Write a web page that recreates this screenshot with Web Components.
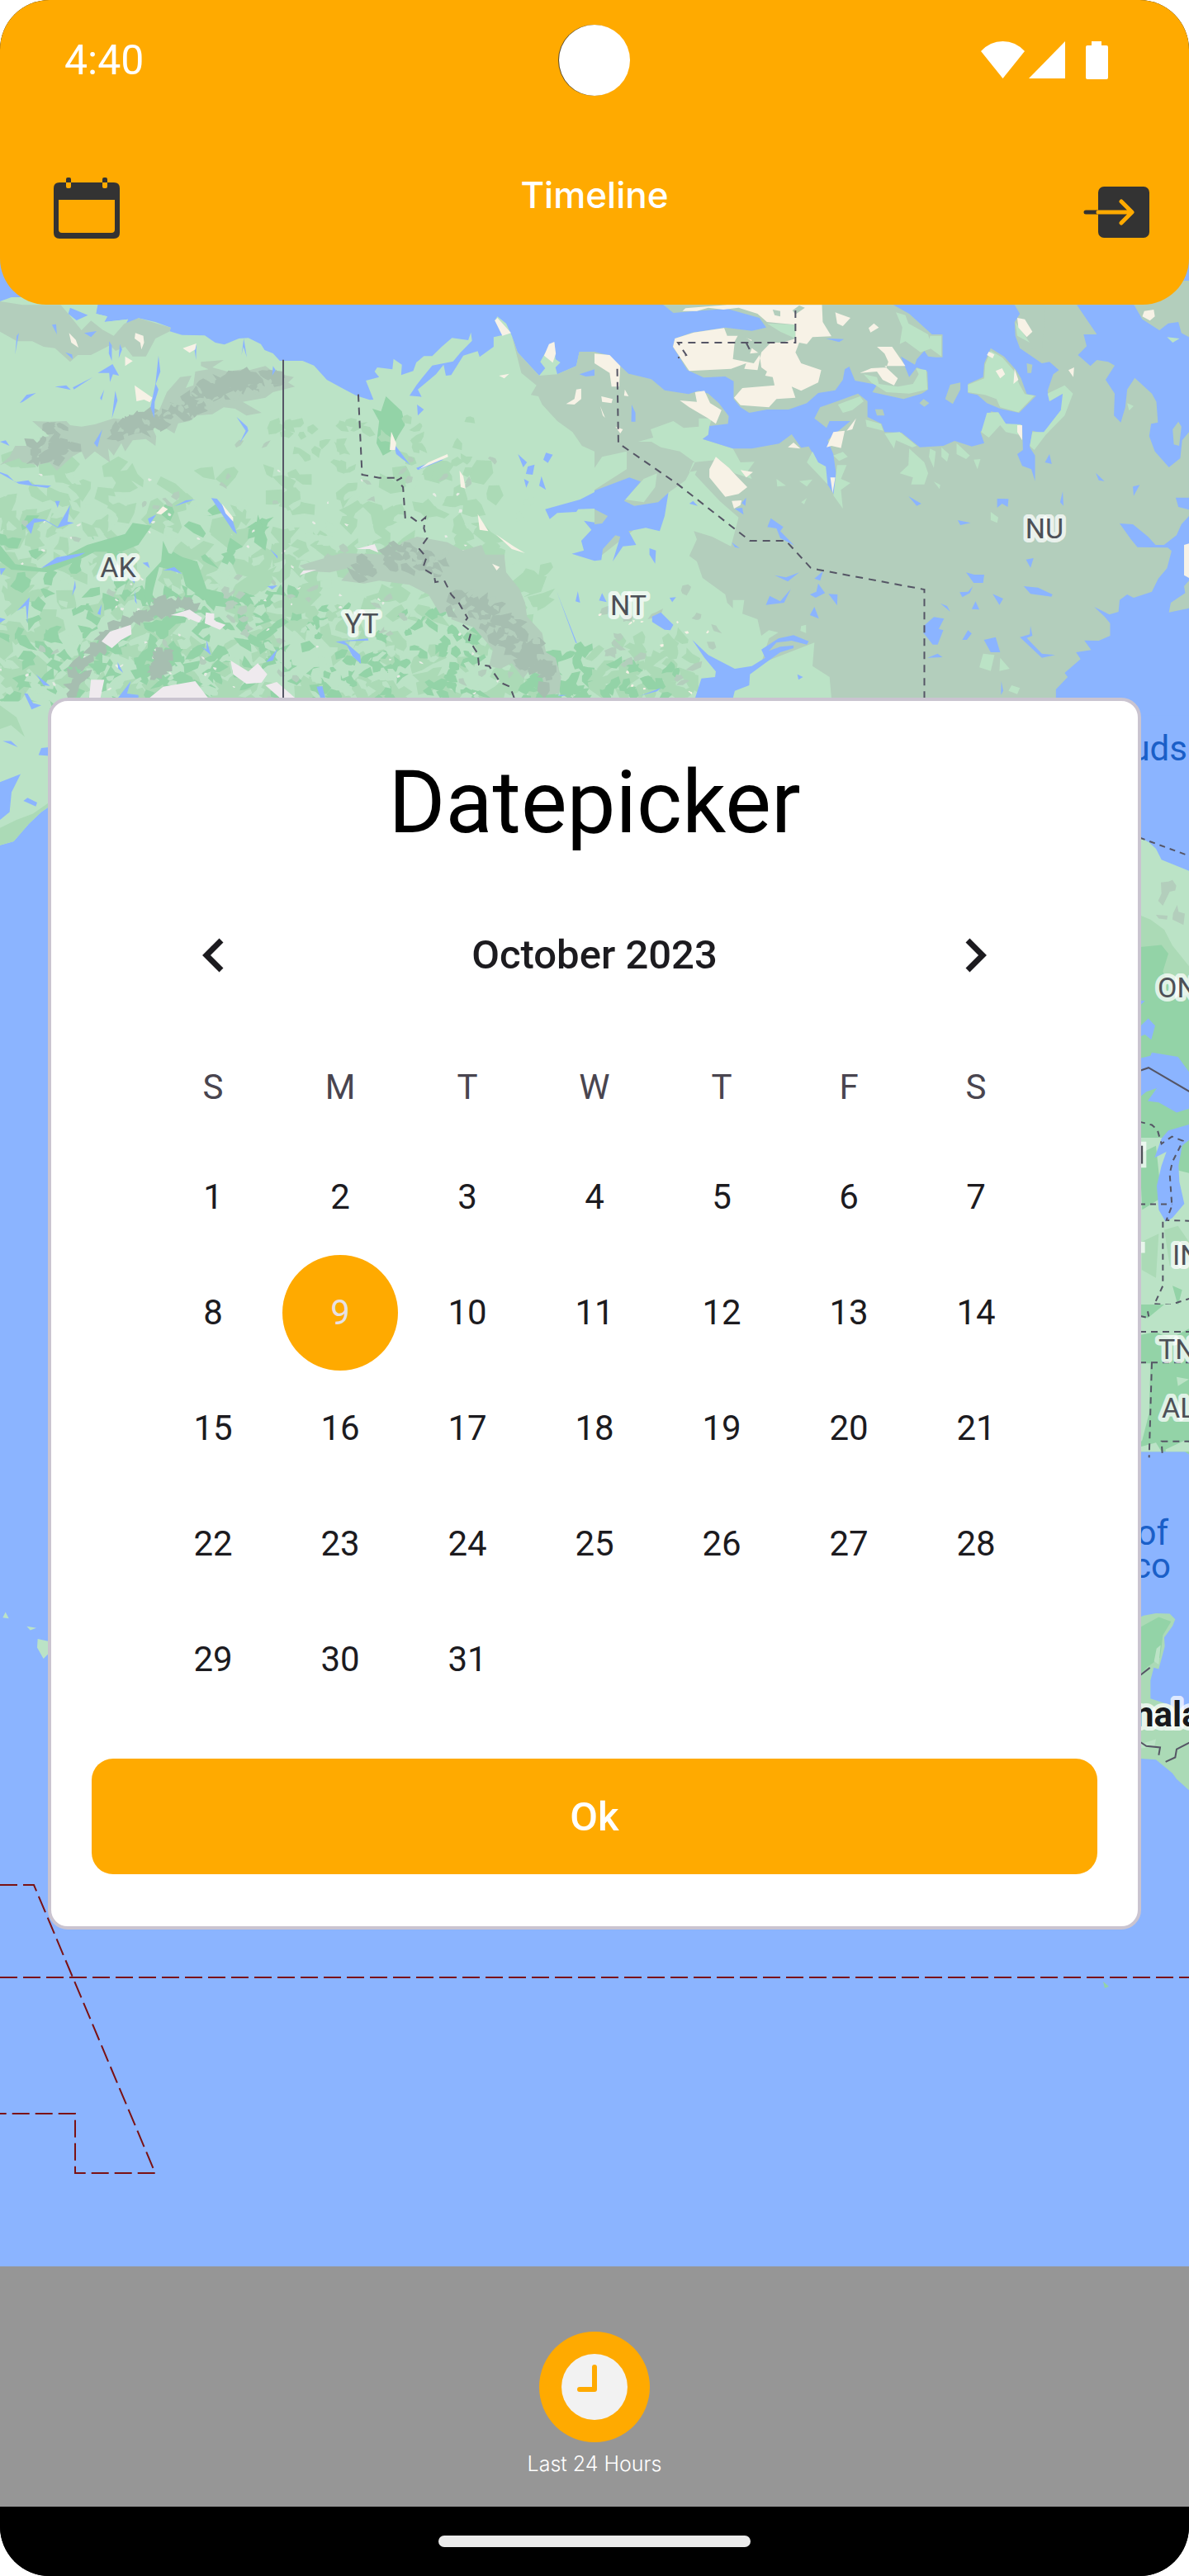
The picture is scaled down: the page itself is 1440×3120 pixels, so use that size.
<!DOCTYPE html>
<html lang="en">
<head>
<meta charset="utf-8">
<meta name="viewport" content="width=device-width, initial-scale=1">
<title>Timeline</title>
<style>
  html, body { margin: 0; background: #fff; }
  body { font-family: Roboto, "Liberation Sans", sans-serif; color: #1c1b1f; --accent: #ffaa00; --ink: #333333; }
</style>
</head>
<body>
<phone-screen>
  <app-header slot="header" heading="Timeline"><status-bar time="4:40"></status-bar></app-header>
  <map-stage><date-picker heading="Datepicker" year="2023" month="10" selected="9"></date-picker></map-stage>
  <range-bar slot="footer" label="Last 24 Hours"></range-bar>
  <nav-handle slot="footer"></nav-handle>
</phone-screen>

<template id="map-art"><svg viewBox="0 305 1440 2440" preserveAspectRatio="xMidYMin slice">
  <!-- north-west: Alaska, Yukon, Northwest Territories -->
  <g transform="translate(0 360) scale(.45918 .33333)">
    <path fill="#bbe3c6" d="M0 15L30 0H258L253 60L283 70L275 90L338 80L325 118L365 76L410 90L450 110L448 124L480 137L540 139L568 165L592 172L630 150L655 148L688 170L698 192L720 204L738 231L798 231L828 248L862 300L905 332L940 358L975 373L985 372L965 303L1000 290L988 270L995 255L1035 262L1038 224L1060 245L1058 283L1090 268L1098 237L1118 214L1140 214L1165 180L1192 148L1235 156L1242 128L1245 158L1215 200L1195 233L1140 248L1115 290L1098 320L1080 358L1112 362L1102 335L1115 320L1150 280L1170 245L1176 285L1190 283L1222 212L1260 196L1265 217L1302 180L1302 145L1335 135L1305 85L1312 70L1335 95L1350 140L1365 200L1422 285L1438 258L1425 235L1437 205L1462 165L1465 225L1478 237L1465 255L1470 280L1520 250L1528 200L1568 198V1500H0Z"/>
    <path fill="#b3cebc" d="M0 15L60 28H165L190 45L250 60L285 120L365 76L450 110L448 124L410 150L385 215L350 215L330 180L305 195L290 175L240 210L205 210L185 235L145 185L115 180L85 160L45 160L0 125Z M1350 140L1375 275L1415 320L1400 355L1420 360L1430 390L1470 450L1510 490L1535 540L1568 560V198H1528L1520 250L1470 280L1422 285L1365 200Z"/>
    <path fill="#bbe3c6" d="M160 28H258L253 60L283 70L275 90L338 80L300 140L270 118L240 85L215 120L180 60Z"/>
    <path fill="#93d3a7" d="M1018 360L1060 415L1068 465L1050 505L1030 560L1010 575L993 530L1000 450L982 405L1005 415Z"/>
    <g id="texture"></g>
    <path fill="#b3cebc" d="M85 450L130 452L175 450L185 465L215 470L250 462L300 440L330 445L360 425L420 410L440 345L475 290L505 285L490 330L510 320L515 270L550 262L530 250L530 235L590 228L560 255L600 270L640 262L650 268L700 250L725 275L775 290L760 310L778 325L720 345L700 365L640 380L690 420L650 430L620 405L590 400L560 425L520 430L500 450L470 458L460 495L430 470L400 470L412 505L410 540L385 515L350 520L330 560L320 530L300 575L285 550L290 600L250 560L225 590L215 560L190 580L150 630L130 600L100 610L60 600L50 585L0 610L25 580L40 540L70 540L110 545L105 510L130 505Z"/>
    <path fill="#b3cebc" d="M790 975L900 930L1040 935L1060 890L1100 870L1180 890L1220 920L1270 900L1280 935L1330 935L1335 1000L1370 1060L1385 1110L1390 1160L1430 1220L1440 1290L1465 1310L1480 1380L1475 1440L1440 1445L1430 1380L1400 1350L1380 1385L1350 1330L1320 1350L1290 1340L1300 1280L1250 1200L1190 1170L1200 1130L1160 1150L1130 1080L1080 1045L1000 1030L960 1040L900 1030L930 980L870 1000L810 995Z"/>
    <g id="relief"></g>
    <g fill="#8bb4ff">
      <path d="M185 38L232 65L202 84L180 60ZM258 275L297 243L314 285L298 280L290 308L288 275ZM50 130L40 208L44 140ZM137 100L148 98L150 135ZM222 130L255 123L240 145ZM172 200L190 208L192 225ZM288 160L295 175V232L287 205ZM316 170L322 190L313 222ZM418 212L423 270L411 315L418 335L408 380L407 440L397 400L410 315ZM643 150L651 218L642 180L637 210ZM518 168L513 190L517 228ZM145 325L175 320L187 337ZM245 290L195 335L192 328ZM95 348L60 380L52 385L70 355ZM304 340L310 375L295 440ZM275 335L268 375L264 367ZM270 480L257 545L248 530ZM624 435L652 470L655 485L632 530L648 485ZM720 250L727 265L718 285ZM0 635L20 645L40 672L75 665L85 680L135 685L125 693L50 678L0 640ZM0 525L15 520L25 540ZM90 803L118 808L152 835L185 755L178 815L195 820L152 838L120 812L90 820L82 860L68 832ZM108 985L150 945L225 928L210 940ZM460 760L490 738L515 735ZM557 730L572 732L610 795L625 860L615 850ZM412 790L395 825L390 805ZM145 740L158 740L152 765ZM0 985L15 985L2 1010ZM350 970L355 1040L343 1020ZM376 965L390 962L395 985ZM430 992L460 980L480 1005L450 992ZM190 1085L198 1028L200 1055ZM45 1140L78 1090L75 1130L72 1185L68 1120ZM355 1065L361 1115L356 1105ZM268 1115L265 1155L257 1150ZM0 1165L15 1170L0 1183ZM545 1245L556 1300L530 1270L545 1280ZM732 1278L720 1320L702 1325ZM705 1050L732 1047L718 1062ZM95 1370L132 1412L115 1410ZM310 1325L325 1365L312 1350ZM345 1395L335 1440L365 1445V1458H310ZM60 1420L85 1480H108L90 1498ZM885 1252L970 1240L972 1247L908 1250L950 1300L952 1332L930 1305L915 1265ZM835 1415L850 1413L858 1455H845ZM712 915L732 940V950ZM1038 530L1082 610L1045 570ZM1098 620L1155 590L1170 590L1102 628ZM1100 390L1118 408L1102 430ZM1366 570L1390 600L1380 618ZM1440 565L1458 572L1445 602L1433 590ZM1392 615L1410 608L1405 645L1387 642ZM1382 660L1395 670L1388 692ZM1428 650L1440 700L1422 685ZM1468 1068L1522 1258L1518 1255ZM1524 1068L1530 1110L1518 1105ZM1470 1445H1495L1480 1450Z"/>
      <path d="M1438 770L1530 735L1568 708V768L1525 770L1520 780L1470 784L1450 806ZM1540 812L1568 818V958L1508 932L1540 920L1533 885L1560 845ZM1528 280L1568 262V285L1545 288Z"/>
    </g>
    <g fill="#f7f2e6">
      <path d="M357 130L378 140L380 165L373 190L370 165L355 150ZM182 130L200 155L207 183L188 165ZM482 185L518 168L515 190L500 202ZM330 215L350 232L330 250ZM355 320L402 365L395 382L380 372L360 378ZM1305 85L1312 75L1348 130L1325 140ZM1462 162L1466 205L1458 238L1435 212L1448 170ZM1316 285L1343 278L1330 295ZM1520 335L1533 332L1533 370L1515 390L1493 388L1515 370ZM1032 488L1045 530L1042 555H1028ZM1180 570L1182 580L1105 625L1130 600ZM1212 630L1222 650L1228 695L1215 690ZM1260 788L1288 850L1265 845ZM1308 862L1355 905L1385 930L1350 915ZM412 785L430 760L443 770L425 790ZM585 750L615 800V815L595 785ZM1298 968L1318 980L1310 993Z"/>
    </g>
    <g fill="#efeaee">
      <path d="M268 1250L290 1215L345 1190L347 1225L320 1245L295 1275ZM450 1155L500 1135L533 1165L525 1183L485 1160ZM543 1145L565 1150L565 1175L595 1190L580 1208L540 1185ZM608 1320L655 1360L680 1330L705 1370L690 1400L650 1405L615 1370ZM395 1455L430 1415L515 1395L550 1458ZM240 1390H275L265 1455H235ZM700 1410L730 1398L780 1458H740ZM940 915L988 897L998 928L975 915ZM790 1010L800 993L835 990Z"/>
    </g>
    <g fill="none" stroke="#555565" stroke-width="2">
      <path vector-effect="non-scaling-stroke" d="M747 227V1458"/>
      <path vector-effect="non-scaling-stroke" stroke-dasharray="9 7" d="M945 353L955 645L1000 656H1060L1048 665L1063 690L1069 805L1085 800L1105 820L1122 800L1118 840L1127 875L1106 915L1125 945L1115 985L1145 1010L1148 1035L1172 1030L1190 1080L1210 1110L1233 1165L1220 1190L1243 1215L1237 1245L1260 1295L1263 1335L1290 1340L1320 1400L1345 1415L1356 1455"/>
    </g>
  </g>
  <!-- north-east: Nunavut and the arctic islands -->
  <g transform="translate(720 360) scale(.45918 .33333)">
    <path fill="#b3cebc" d="M0 -60H1568V1458H0Z"/>
    <path fill="#bbe3c6" d="M148 480L208 450L235 475L275 470L275 440L310 440L303 468L300 500L285 515L365 550L385 600L422 598L405 630L415 660L370 640L330 590L260 600L250 635L270 630L265 645L330 740L380 800L360 905L310 870L262 850L270 880L250 940L270 960L285 1020L345 1080L350 1110L365 1130L365 1100H395L390 1150L430 1170L440 1230L460 1210L485 1218L460 1240L440 1330L580 1255L575 1340L620 1380L625 1458H0V958L100 850L195 710L240 665L265 600L225 560L175 545L150 525H115L155 510ZM0 620L20 580L85 560V625L0 700ZM130 660L165 640L160 690L130 745L80 735Z"/>
    <g id="texture-east"></g>
    <path fill="#8bb4ff" d="M0 -60H182V28L208 57L265 50L350 42L435 75L453 110L415 122L345 110L258 128L212 150L207 180L245 265L288 292L345 288L367 305V370L385 400L408 420L455 408H512L560 385L590 348L635 338L655 300L660 262L672 252L687 303L745 318L733 345L815 370L863 350L880 335L878 270L850 255L830 290L808 215L845 245L850 225L870 195L880 215L900 218H918V135H890L830 60L788 28H1108L1122 60L1108 90L1110 140L1122 185L1180 240L1200 235L1225 265L1210 280L1195 340L1200 378L1235 350L1240 400L1210 450L1185 495L1155 485L1148 545L1162 575V668L1152 625L1128 613L1115 570L1130 555L1128 465L1080 460L1065 420L1045 415V445L1018 490L1028 530L995 542L950 522L920 540L858 545L810 492L765 490L757 460L720 435V378L695 350L640 378L595 400L580 440L612 475L620 450H675L640 490L615 520L630 570L637 640L632 718L605 660L585 590L565 542L545 547L520 498L487 532L415 550H365L285 515L300 500L303 468L352 460L354 432L328 385L300 350L275 340L248 352L185 338L150 298L90 278L68 250L35 210L0 198Z"/>
    <path fill="#8bb4ff" d="M1272 28L1325 135H1290L1298 178L1275 210L1308 250L1325 228L1355 235L1372 248L1348 300L1372 350L1370 430L1388 455L1400 400L1405 335L1425 293L1470 350L1482 380L1486 455L1468 460L1463 505L1478 560L1515 618L1545 585L1550 520L1568 490V145L1548 130L1540 90L1513 95L1490 120L1445 80L1423 28ZM1568 728L1533 728L1540 762L1568 772ZM1385 822L1420 825L1460 870L1480 900H1502L1535 865L1548 825L1568 795V1520H1217V1425L1248 1380L1240 1365L1282 1315L1270 1290L1310 1282L1292 1247L1330 1248L1360 1230V1185L1345 1160L1318 1125L1358 1153L1382 1143L1385 1100L1405 1080L1422 1092L1470 1070L1487 1022L1510 985L1522 922L1512 910L1432 908L1415 880ZM0 703L92 655L122 670L78 740L105 758L168 745L195 710L185 795L172 850L135 838L90 850L110 900L75 905L48 960L68 870L55 865L22 915L18 955L0 958V825L20 822L35 795L0 770ZM258 1245L300 1300L370 1350L415 1340L450 1310L440 1280L485 1240L525 1228L565 1250L560 1262L520 1248L480 1255L460 1285L490 1270L525 1265V1275L490 1290L450 1330L410 1370L408 1410L370 1430L365 1458H265L282 1385L318 1380L320 1360L290 1310Z"/>
    <path fill="#8bb4ff" d="M98 390L108 420V452H97ZM610 150L658 152L645 163ZM250 750L260 740L272 758ZM400 728L398 758L388 748ZM370 768L390 765L393 790ZM465 803L498 835L490 850L527 902L490 875L480 840L456 835ZM145 912L162 920L160 968L145 935ZM362 890L383 912L370 908ZM475 1010L505 1018L540 1000L510 1033ZM603 995L595 1030L580 1022ZM590 1040L608 1075L583 1092L568 1080L585 1070ZM617 1078L641 1080L640 1120ZM462 1085L490 1105L518 1060L500 1110L452 1118ZM580 1125L592 1168L568 1155ZM828 723L862 750L850 758ZM1062 732L1092 733L1090 762L1075 750L1062 765ZM1235 705L1237 758L1228 745ZM1322 638L1345 668L1330 665ZM1420 688L1438 682L1422 722ZM1200 570L1206 606L1188 600ZM958 810L992 820L965 828ZM1138 953L1158 948L1150 983ZM980 1000L1002 1008L1028 1008L1025 1038H1000ZM1132 1050L1170 1055L1208 1080L1205 1088L1150 1078ZM963 1072L985 1070L998 1050L990 1075L970 1090ZM1050 1078L1078 1095L1068 1118ZM1005 1105L1015 1135L995 1133ZM912 1112L930 1122L938 1142ZM895 1162L922 1168L908 1205L920 1210L905 1262H892L868 1220V1195ZM985 1210L995 1222L982 1245L970 1245ZM1027 1245L1058 1235L1070 1290H1045ZM1150 1195L1155 1230L1140 1238L1180 1295L1215 1300L1180 1310L1122 1235L1148 1225ZM905 1295L918 1308L878 1310ZM1073 1395L1078 1430L1072 1445ZM175 1145L208 1190L200 1210L185 1208L152 1180V1160ZM198 1092L215 1090L205 1108ZM20 1075L32 1108L12 1102ZM535 1370L550 1380L538 1390ZM0 1345L45 1370ZM120 1448L175 1420L165 1432Z"/>
    <path fill="#b3cebc" d="M985 315L1025 290L1028 240L1045 185L1080 215L1112 265L1125 295L1140 352L1165 358L1120 420L1070 405L1035 385L1010 355L985 348ZM938 318L965 310V335L945 388L925 370ZM868 370L883 385L870 398L857 385ZM740 407H760L765 430H745ZM1525 480L1540 452L1548 470L1542 540L1528 535ZM1122 185L1180 190L1190 28H1122ZM1140 240L1155 245L1152 275H1142Z"/>
    <path fill="#bbe3c6" d="M985 318L1028 295L1030 245L1045 195L1075 218L1105 265L1120 315L1135 352L1160 358L1118 418L1070 400L1060 370L1030 355L985 345ZM795 55L820 65L828 95L880 135L890 185L860 200L820 160L805 170L812 110ZM885 140H915V215L880 180ZM710 280L745 290L750 315L800 325L840 315L855 280L848 258L875 265L878 335L830 350L770 345L730 310ZM642 390L700 360L710 378L680 410L655 420ZM455 95L530 100L530 150L490 125ZM715 445L755 460L762 485L718 470ZM765 495L805 490L850 540L838 545L795 520L790 550ZM830 550L870 600L880 640L870 680H835L840 655L805 640L828 610ZM885 550L900 560L895 620L882 580ZM915 545L935 570L930 598L915 580ZM955 530L990 575L980 588L955 570ZM1000 590L1018 588L1010 625ZM575 560L590 600L610 615L615 680L560 600ZM640 610L665 610L650 660L675 675L650 700L655 768L630 720ZM630 575L655 562L668 580L645 595ZM1035 420L1065 418L1085 460L1125 462L1120 500L1085 490L1070 465L1040 510L1020 490ZM1195 350L1240 320L1262 350L1240 430L1190 500L1160 555L1148 540L1155 490L1185 490L1230 410L1235 350L1200 378ZM1405 385L1422 395L1410 412ZM480 660L505 685L482 688ZM540 668L575 662L560 688ZM895 670L912 682L910 697ZM545 745L560 730L553 752ZM1045 780L1065 800L1062 820L1045 810ZM1025 1295L1055 1300L1045 1358L1015 1345ZM1070 1310L1095 1350L1068 1358ZM1100 1410L1122 1420L1115 1442L1092 1430ZM545 1195L558 1190V1220L543 1212ZM1110 90L1148 165L1115 140ZM1510 145L1543 150L1525 165Z"/>
    <path fill="#f7f2e6" d="M232 50L240 40L350 28H600L602 90L625 142L575 145L560 170L540 165L530 200L545 240L598 265L590 310L545 340L520 325L530 365L480 370L460 400L385 392L368 365L390 330L475 320L470 290L450 285L455 270L440 255L435 205L410 180L415 155L385 140H350L342 112L262 128L212 150L207 180L250 268L360 260L400 240L395 260L430 265L440 200L465 165H495L530 150V100L455 90L430 60L380 38L340 45L300 38L270 50ZM745 180H785L820 250L765 250L800 295L790 320L760 300L745 270L700 275L730 258L770 255L775 235L765 205ZM635 55L675 75L655 105L640 95ZM737 95L750 110L728 128L723 112ZM303 625L320 580L355 620L375 650L403 690L380 715L345 725L303 655ZM362 740L388 738L385 755L368 768ZM385 628L418 635L400 655ZM225 375L270 380L265 345L290 340L305 385L335 410L320 460L300 440L250 400ZM0 205L40 210L68 250L65 325L45 325L40 275L0 240ZM18 360L48 370L45 385L20 380ZM80 335L90 360L78 358ZM15 395L28 438L22 430ZM55 470L75 480L68 495ZM665 485L690 440L680 480ZM612 545L630 490L660 485L650 548L625 540ZM510 545L525 528L543 550ZM622 655H635L628 712ZM1115 75L1135 80L1155 125L1140 145L1118 110ZM1450 50L1475 45L1478 70L1465 85L1445 70ZM1040 198L1055 208L1050 222L1035 210ZM1058 268L1075 258L1083 280L1070 295ZM1108 260L1118 300L1105 315ZM1115 465L1128 465V520L1115 490ZM1555 900L1568 895V1020L1555 1010ZM1250 265L1265 255L1263 290Z"/>
    <path fill="#b3cebc" d="M382 130L420 165L410 205L440 200L420 240L365 225L370 160ZM470 45L490 50V70L475 65ZM522 48L540 30L555 38L530 62ZM1568 1030L1555 1050L1558 1075L1520 1110L1515 1145L1568 1130Z"/>
    <g fill="none" stroke="#555565" stroke-width="2" stroke-dasharray="9 7">
      <path vector-effect="non-scaling-stroke" d="M530 48V165H220L242 210L220 220M400 165L410 192M60 260L63 530L220 680L410 885H505L570 983L590 990L870 1062V1455"/>
    </g>
  </g>
  <!-- Pacific coast and islands -->
  <g transform="translate(0 840) scale(.33333 .95663)">
    <path fill="#bbe3c6" d="M0 10H180V143L150 150L105 165L50 187L0 192Z"/>
    <path fill="#abdab6" d="M0 170L60 160L120 152L178 138V143L150 150L105 165L50 187L0 192ZM0 15L60 30L90 55L40 40L0 45Z"/>
    <path fill="#8bb4ff" d="M0 112L75 102L42 125L35 150L0 160ZM85 136L100 132L135 138L130 143ZM140 78L150 69L178 68V79ZM88 0H100L120 12L150 15L115 20ZM10 60L40 60L65 68Z"/>
    <path fill="#bbe3c6" d="M10 1170L20 1163L32 1171ZM97 1181L132 1183L110 1186ZM137 1197L178 1200V1215L158 1222L135 1208Z"/>
  </g>
  <!-- Ontario and the Great Lakes -->
  <g transform="translate(1340 840) scale(.33333 .48469)">
    <path fill="#bbe3c6" d="M100 352L155 372L180 388L200 415L310 446V1620H100Z"/>
    <path fill="#abdab6" d="M100 548L160 565L210 590L240 630L310 690V900H100Z"/>
    <path fill="#93d3a7" d="M100 635L200 628L225 650L205 695L250 760L310 750V1110H100ZM230 1100L310 1110V1200L250 1190ZM240 1480L275 1490L260 1530ZM120 1150L180 1130L200 1260L130 1290Z"/>
    <path fill="#b3cebc" d="M198 472L225 470L240 466L254 480L250 492L230 495L205 530L188 518L200 500ZM180 553L222 555L220 565L190 562ZM242 550L257 528L262 545L285 550L280 578L240 565Z"/>
    <path fill="#8bb4ff" d="M100 765L140 768L125 778ZM125 830L152 812L177 830L163 865L140 852L120 858ZM100 915L160 905L165 897L260 908L310 955V1035L255 1047L190 1022L150 1018L183 986L145 995L100 1020ZM200 1112L225 1092L310 1075V1110L275 1130L262 1180L265 1220L283 1275L240 1310L215 1320L190 1290L183 1230L200 1180L218 1145L175 1160Z"/>
    <path fill="#abdab6" d="M128 1370L190 1350L180 1460L128 1440ZM210 1340L260 1330L310 1380V1420L230 1430Z"/>
    <g fill="none" stroke="#555565" stroke-width="2">
      <path vector-effect="non-scaling-stroke" d="M120 943L153 935L310 998"/>
      <path vector-effect="non-scaling-stroke" stroke-dasharray="7 6" d="M120 360L310 408M120 1070L165 1078L185 1090L200 1125L238 1107L278 1118L240 1170L230 1200L238 1280L218 1316L310 1318M120 1276H238M205 1320V1480L175 1525L120 1562M175 1525L230 1528L310 1510"/>
    </g>
    <path fill="#ffffffb8" d="M120 1120H145V1185H120ZM120 1370H140V1398H120Z"/>
    <path fill="none" stroke="#4d5057" stroke-width="3" vector-effect="non-scaling-stroke" d="M128 1130V1175"/>
  </g>
  <!-- Gulf coast and Central America -->
  <g transform="translate(1340 1580) scale(.33333 .54847)">
    <path fill="#93d3a7" d="M100 0H310V335L285 325H100Z"/>
    <path fill="#bbe3c6" d="M100 20L150 30L210 0H310V50L230 75L180 60L100 70ZM100 130H160L155 240L130 300L100 320ZM215 320L285 300L310 310V325H215ZM255 160L300 165L260 180ZM100 318L180 305L200 325H100Z"/>
    <path fill="#abdab6" d="M100 697L135 687L180 682L230 683L250 695L240 710L210 735L212 755L190 805L172 802L160 830V870L310 900V1078L255 1048L240 1035L180 1005L100 1002Z"/>
    <path fill="#93d3a7" d="M100 720L190 690L235 700L205 730L195 780L150 800L100 830Z"/>
    <path fill="#bbe3c6" d="M182 760L197 752L190 795L173 788ZM100 975L180 960L175 975L130 980Z"/>
    <g fill="none" stroke="#555565" stroke-width="2">
      <path vector-effect="non-scaling-stroke" stroke-dasharray="8 6" d="M120 60H310M120 128H310M165 128L155 338M203 328L200 302H310M120 25L155 30L150 15"/>
      <path vector-effect="non-scaling-stroke" d="M120 820L158 802M120 965L145 975L195 978L190 995M215 1010L250 1000L255 982L310 965"/>
    </g>
  </g>
  <path fill="#93d3a7" d="M1336 2400L1343 2406L1338 2408Z"/>
  <g fill="none" stroke="#7b1113" stroke-width="2" stroke-dasharray="21 7">
    <path d="M0 2395H1440M0 2283H41L188 2632H91V2560H0"/>
  </g>
  <g class="place" text-anchor="middle">
    <text x="143" y="699">AK</text><text x="438" y="767">YT</text><text x="761" y="745">NT</text><text x="1265" y="652">NU</text>
  </g>
  <g class="place">
    <text x="1402" y="1208">ON</text><text x="1420" y="1532">IN</text><text x="1403" y="1646">TN</text><text x="1407" y="1717">AL</text>
  </g>
  <g class="sea" text-anchor="end">
    <text x="1438" y="921">uds</text><text x="1415" y="1871">of</text><text x="1418" y="1911">co</text>
  </g>
  <text class="country" x="1374" y="2091">nala</text>
</svg></template>

<script>
const define = (name, markup, setup) => customElements.define(name, class extends HTMLElement {
  constructor() {
    super();
    this.attachShadow({ mode: "open" });
  }
  connectedCallback() {
    this.shadowRoot.innerHTML = markup(this);
    if (setup) setup(this.shadowRoot, this);
  }
});

define("phone-screen", () => `
  <style>
    :host { display: flex; flex-direction: column; overflow: hidden; border-radius: 60px; background: #000; }
    main { display: block; margin-top: -64px; }
    header { position: relative; z-index: 1; }
  </style>
  <header><slot name="header"></slot></header>
  <main><slot></slot></main>
  <footer><slot name="footer"></slot></footer>`);

define("status-bar", el => `
  <style>
    :host { display: grid; grid-template-columns: 1fr 86px 1fr; align-items: center; height: 146px; padding: 0 98px 0 78px; color: #fff; font-size: 50px; line-height: 60px; box-sizing: border-box; }
    .lens { width: 86px; height: 86px; border-radius: 50%; background: #fff; margin-left: 10px; box-shadow: -1px 0 0 #5a4a2a; }
    svg { justify-self: end; width: 154px; height: 46px; display: block; }
  </style>
  <span>${el.getAttribute("time")}</span>
  <span class="lens"></span>
  <svg viewBox="0 0 154 46" fill="#fff" role="img" aria-label="Wi-Fi, signal, battery">
    <path d="M0 12Q11 0 26.500 0T53 12L26.500 45Z"/>
    <path d="M102 0V45H58Z"/>
    <path d="M134 0h12v5h6q2 0 2 2v37q0 2-2 2h-23q-2 0-2-2V7q0-2 2-2h5z"/>
  </svg>`);

define("app-header", el => `
  <style>
    :host { display: flex; flex-direction: column; height: 369px; background: var(--accent); border-radius: 0 0 56px 56px; }
    .row { display: grid; grid-template-columns: 1fr auto 1fr; align-items: start; padding: 57px 48px 0 65px; }
    button { border: 0; padding: 0; background: none; display: block; }
    .exit { justify-self: end; }
    h1 { margin: 9px 0 0 -17px; color: #fff; font: 500 44px/48px Inter, sans-serif; }
    svg { display: block; }
  </style>
  <slot></slot>
  <div class="row">
    <button aria-label="Open calendar"><svg width="80" height="88" viewBox="0 0 80 88">
      <path fill="var(--ink)" fill-rule="evenodd" d="M7 18H73Q80 18 80 25V79Q80 86 73 86H7Q0 86 0 79V25Q0 18 7 18ZM6 39V75Q6 79 10 79H70Q74 79 74 75V39Z"/>
      <path fill="var(--ink)" d="M15 18v-4q0-2 2-2h2q2 0 2 2v4zM59 18v-4q0-2 2-2h2q2 0 2 2v4z"/>
      <path fill="var(--accent)" d="M15 18h6v5q0 2-2 2h-2q-2 0-2-2zM59 18h6v5q0 2-2 2h-2q-2 0-2-2z"/>
    </svg></button>
    <h1>${el.getAttribute("heading")}</h1>
    <button class="exit" aria-label="Leave"><svg width="80" height="88" viewBox="0 0 80 88">
      <rect x="18" y="23" width="62" height="62" rx="7" fill="var(--ink)"/>
      <path d="M3 54H18" stroke="var(--ink)" stroke-width="5" stroke-linecap="round"/>
      <path d="M18 54H58M46 41L59 54L46 67" stroke="var(--accent)" stroke-width="5" stroke-linecap="round" stroke-linejoin="round" fill="none"/>
    </svg></button>
  </div>`);

define("map-stage", () => `
  <style>
    :host { display: block; position: relative; padding: 540px 58px 408px; background: #8bb4ff; overflow: hidden; }
    svg { position: absolute; inset: 0; width: 100%; height: 100%; }
    .card { position: relative; }
    .place, .country { paint-order: stroke; stroke: #ffffffb8; stroke-width: 10px; stroke-linejoin: round; }
    .place { fill: #4d5057; font-size: 34px; }
    .sea { fill: #1a5fc8; font-size: 42px; }
    .country { fill: #18191c; font-size: 42px; font-weight: 700; }
  </style>
  <div class="card"><slot></slot></div>`, root => {
  root.querySelector(".card").before(document.getElementById("map-art").content.cloneNode(true));
  const svg = root.querySelector("svg");
  // Land-cover patches: a seeded scatter, denser towards the south.
  let seed = 77;
  const rnd = () => (seed = (seed * 16807) % 2147483647) / 2147483647;
  const blob = (x, y, size) => {
    const n = 5 + Math.floor(rnd() * 4), turn = rnd() * 6.28, lean = (rnd() - .5) * 1.6;
    let d = "";
    for (let k = 0; k < n; k++) {
      const a = turn + k * 6.283 / n, r = size * (.35 + rnd() * .9);
      d += (k ? "L" : "M") + Math.round(x + Math.cos(a) * r + lean * Math.sin(a) * r) + " " + Math.round(y + Math.sin(a) * r * 1.3);
    }
    return d + "Z";
  };
  const patches = (count, color, x0, x1, y0, y1, size, bias, inside) => {
    let d = "";
    for (let i = 0; i < count; i++) {
      const x = x0 + rnd() * (x1 - x0), y = y0 + Math.pow(rnd(), bias) * (y1 - y0);
      if (!inside || inside(x, y)) d += blob(x, y, size);
    }
    return `<path fill="${color}" d="${d}"/>`;
  };
  // Mountain relief: blobs strewn along a ridge line.
  const ridge = (count, color, line, spread, size) => {
    let d = "";
    for (let i = 0; i < count; i++) {
      const k = Math.floor(rnd() * (line.length - 1)), t = rnd(), a = line[k], b = line[k + 1];
      d += blob(a[0] + (b[0] - a[0]) * t + (rnd() - .5) * spread, a[1] + (b[1] - a[1]) * t + (rnd() - .5) * spread, size);
    }
    return `<path fill="${color}" d="${d}"/>`;
  };
  const west = (x, y) => x < 1300 || y > 950;
  svg.querySelector("#texture").innerHTML =
    patches(330, "#abdab6", 0, 1440, 590, 1500, 34, .85, west) +
    patches(40, "#abdab6", 700, 1240, 430, 650, 18, 1) +
    patches(150, "#93d3a7", 0, 740, 760, 1500, 24, .6) +
    patches(90, "#93d3a7", 740, 1330, 980, 1500, 18, .6) +
    patches(60, "#93d3a7", 1380, 1568, 1250, 1500, 22, .6) +
    patches(220, "#bbe3c6", 0, 1400, 640, 1500, 17, .8) +
    patches(50, "#b3cebc", 60, 1300, 480, 1500, 12, 1) +
    patches(80, "#e6ece4", 0, 1350, 600, 1500, 5, .8) +
    `<path fill="#93d3a7" d="M0 900L40 970L110 985L230 900L330 860L350 820L400 830L365 900L320 925L250 925L200 960L130 1000L30 990L0 960ZM430 885L445 930L520 960L545 1060L610 1080L620 1130L560 1120L490 1050L480 1000L420 980L405 1060L395 1130L380 1080L385 1020L425 960ZM680 790L705 880L700 920L670 890Z"/>`;
  svg.querySelector("#relief").innerHTML =
    ridge(60, "#a6beb0", [[300, 490], [400, 440], [540, 370], [600, 310], [730, 300]], 60, 22) +
    ridge(22, "#a6beb0", [[90, 570], [160, 540], [180, 590]], 60, 20) +
    ridge(10, "#a6beb0", [[120, 475], [175, 480]], 30, 14) +
    ridge(22, "#b3cebc", [[330, 480], [560, 350], [720, 300]], 70, 10) +
    ridge(26, "#a6beb0", [[950, 990], [1060, 930], [1150, 980]], 70, 20) +
    ridge(60, "#a6beb0", [[1210, 1100], [1290, 1130], [1330, 1220], [1380, 1280], [1440, 1400]], 80, 22) +
    ridge(30, "#b3cebc", [[1100, 940], [1280, 1130], [1400, 1330]], 120, 12) +
    ridge(46, "#a6beb0", [[195, 1430], [215, 1320], [300, 1190], [430, 1120], [530, 1130]], 36, 20) +
    ridge(14, "#a6beb0", [[400, 1370], [440, 1290]], 40, 18) +
    ridge(12, "#b3cebc", [[600, 1030], [640, 1200]], 50, 14);
  svg.querySelector("#texture-east").innerHTML =
    patches(45, "#abdab6", 0, 270, 1200, 1450, 26, .6) +
    patches(16, "#93d3a7", 0, 230, 1320, 1450, 18, .6) +
    patches(16, "#b3cebc", 0, 330, 1000, 1400, 16, 1) +
    patches(12, "#f7f2e6", 0, 300, 1150, 1450, 5, 1);
});

define("date-picker", el => {
  const y = +el.getAttribute("year"), m = +el.getAttribute("month"), sel = +el.getAttribute("selected");
  const first = new Date(y, m - 1, 1).getDay(), total = new Date(y, m, 0).getDate();
  const title = new Date(y, m - 1, 1).toLocaleDateString("en-US", { month: "long", year: "numeric" });
  let rows = "";
  for (let start = 1 - first; start <= total; start += 7) {
    rows += "<tr>";
    for (let d = start; d < start + 7; d++)
      rows += d < 1 || d > total ? "<td></td>" : `<td><button class="day"${d === sel ? ' aria-pressed="true"' : ""}>${d}</button></td>`;
    rows += "</tr>";
  }
  const heads = ["Sunday", "Monday", "Tuesday", "Wednesday", "Thursday", "Friday", "Saturday"];
  return `
  <style>
    :host { display: flex; flex-direction: column; border: 4px solid #cac4d0; border-radius: 24px; background: #fff; padding: 64px 49px 63px; }
    h2 { margin: 0 0 54px; text-align: center; color: #000; font-weight: 400; font-size: 105px; line-height: 120px; }
    .month { display: flex; justify-content: space-between; align-items: center; height: 140px; padding: 0 70px; margin-bottom: 27px; }
    h3 { margin: 0; font-weight: 500; font-size: 49px; line-height: 56px; }
    button { border: 0; padding: 0; margin: 0; background: none; color: inherit; font: inherit; }
    .step { width: 154px; height: 140px; display: grid; place-items: center; }
    .days { padding: 0 70px; }
    table { width: 100%; table-layout: fixed; border-collapse: collapse; font-size: 42px; line-height: 48px; text-align: center; }
    th { height: 126px; padding: 0; font-weight: 400; color: #49454f; }
    td { height: 140px; padding: 0; }
    .day { display: block; width: 140px; height: 140px; margin: 0 auto; border-radius: 50%; }
    .day[aria-pressed] { background: var(--accent); color: #e6e1e5; }
    .ok { margin-top: 50px; height: 140px; border-radius: 26px; background: var(--accent); color: #fff; font-weight: 500; font-size: 49px; }
  </style>
  <h2>${el.getAttribute("heading")}</h2>
  <div class="month">
    <button class="step" aria-label="Previous month"><svg width="28" height="44" viewBox="0 0 28 44"><path d="M24 4L6 22L24 40" fill="none" stroke="#1c1b1f" stroke-width="7"/></svg></button>
    <h3>${title}</h3>
    <button class="step" aria-label="Next month"><svg width="28" height="44" viewBox="0 0 28 44"><path d="M4 4L22 22L4 40" fill="none" stroke="#1c1b1f" stroke-width="7"/></svg></button>
  </div>
  <div class="days"><table>
    <thead><tr>${heads.map(h => `<th scope="col" abbr="${h}">${h[0]}</th>`).join("")}</tr></thead>
    <tbody>${rows}</tbody>
  </table></div>
  <button class="ok">Ok</button>`;
});

define("range-bar", el => `
  <style>
    :host { display: flex; justify-content: center; align-items: flex-start; height: 291px; padding-top: 79px; box-sizing: border-box; background: #969696; }
    button { display: flex; flex-direction: column; align-items: center; gap: 10px; border: 0; padding: 0; background: none; color: #fff; font: 300 25px/32px Inter, sans-serif; }
    svg { display: block; flex: none; }
  </style>
  <button><svg width="134" height="134" viewBox="0 0 134 134">
    <circle cx="67" cy="67" r="67" fill="var(--accent)"/><circle cx="67" cy="67" r="40" fill="#f2f2f2"/>
    <path d="M67 43V70H49" fill="none" stroke="var(--accent)" stroke-width="6" stroke-linecap="round" stroke-linejoin="round"/>
  </svg><span>${el.getAttribute("label")}</span></button>`);

define("nav-handle", () => `
  <style>
    :host { display: grid; place-items: center; height: 84px; background: #000; }
    span { width: 378px; height: 14px; border-radius: 7px; background: #ebebeb; }
  </style>
  <span></span>`);
</script>
</body>
</html>
